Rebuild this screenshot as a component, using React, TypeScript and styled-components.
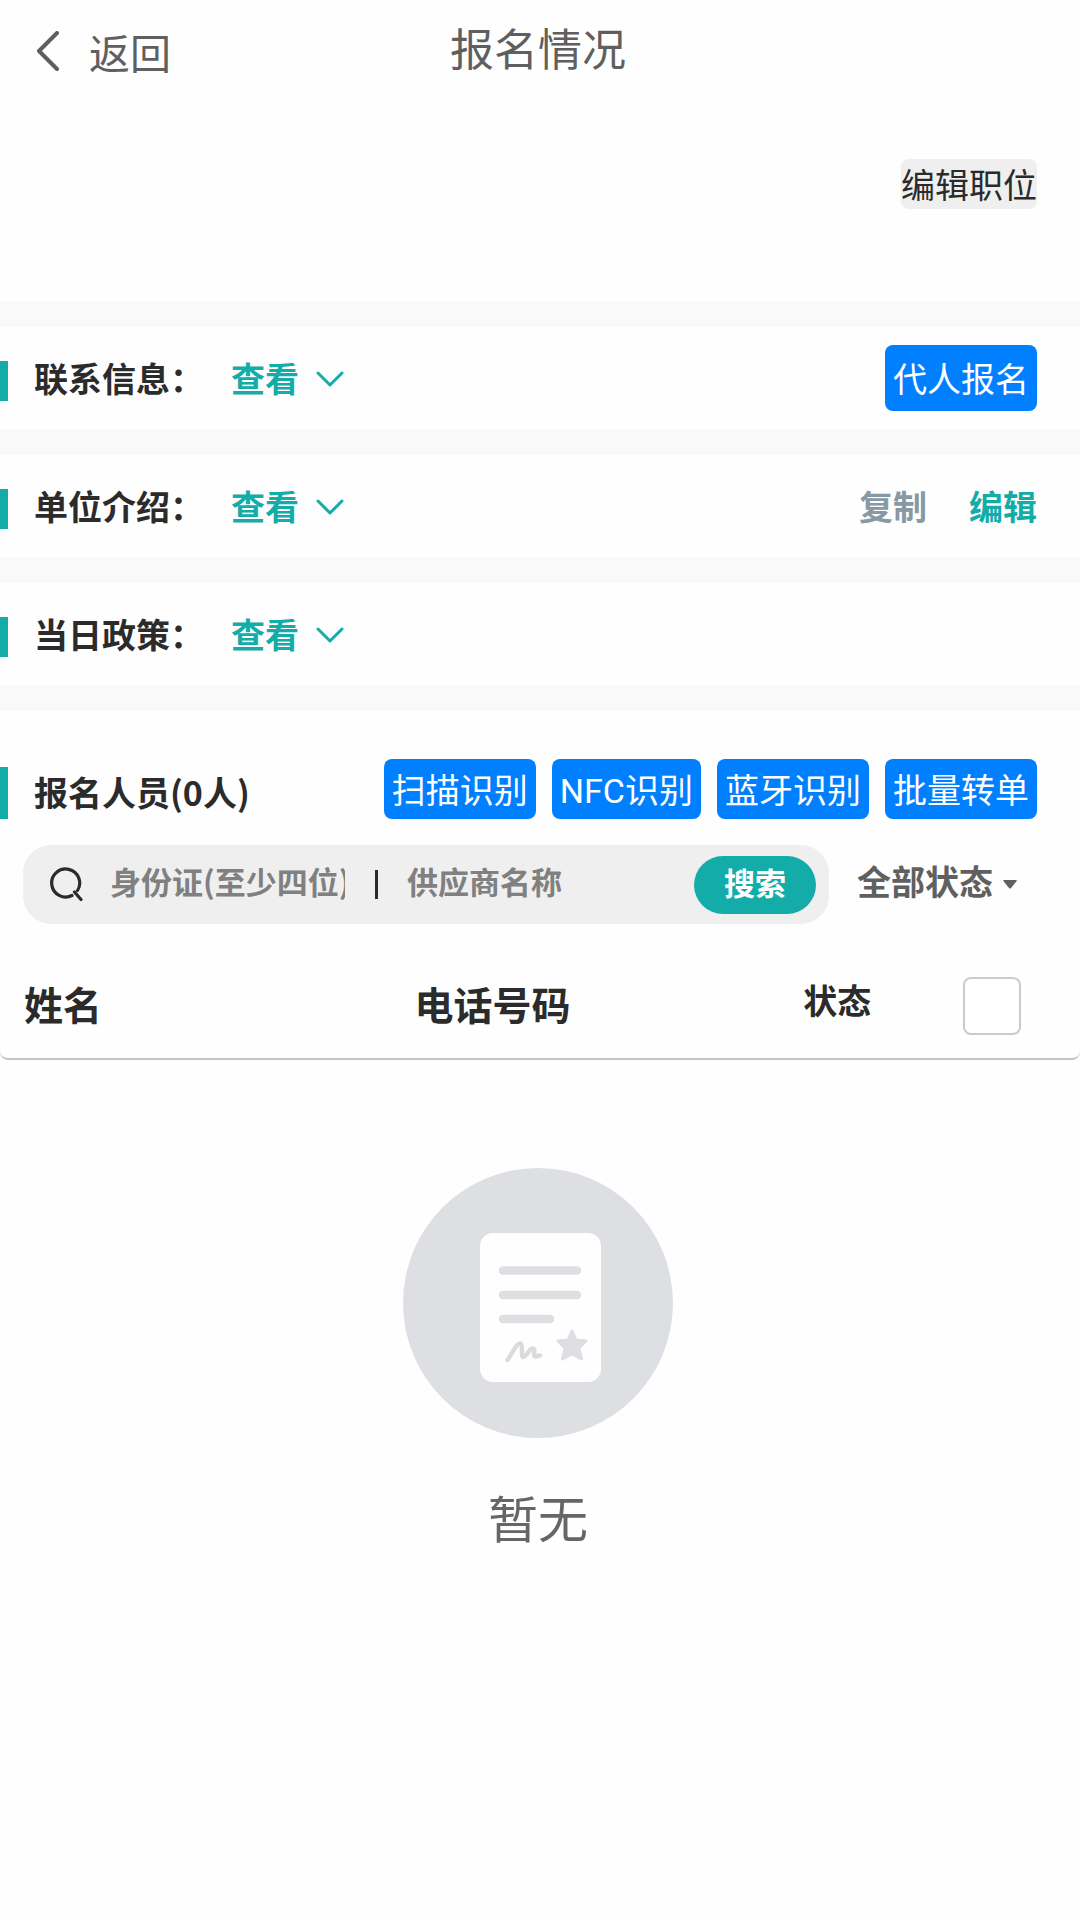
import React from "react";
import styled, { createGlobalStyle } from "styled-components";

const teal = "#13aca9";
const blue = "#0080ff";
const ink = "#2b2b2b";
const mixedFont = `Roboto, "Noto Sans CJK SC", sans-serif`;

const GlobalStyle = createGlobalStyle`
  * { box-sizing: border-box; }
  body {
    margin: 0;
    background: #fefefe;
    color: ${ink};
    font-family: "Noto Sans CJK SC", sans-serif;
  }
  button, input, select { font: inherit; color: inherit; }
  button { cursor: pointer; border: 0; padding: 0; background: none; white-space: nowrap; }
`;

const Page = styled.div`
  min-height: 100vh;
`;

const Header = styled.header`
  display: grid;
  grid-template-columns: 1fr auto 1fr;
  align-items: center;
  height: 102px;
  padding: 0 40px 0 36px;
  color: #5f5f5f;
`;

const BackButton = styled.button`
  display: flex;
  align-items: center;
  gap: 29px;
  justify-self: start;
  font-size: 41px;
  line-height: 60px;
`;

const Title = styled.h1`
  margin: 0;
  font-family: ${mixedFont};
  font-size: 44px;
  font-weight: 400;
  line-height: 64px;
`;

const JobBar = styled.div`
  display: flex;
  justify-content: flex-end;
  align-items: flex-start;
  height: 199px;
  padding: 57px 43px 0 0;
`;

const EditJob = styled.button`
  height: 50px;
  border-radius: 8px;
  background: #efefef;
  font-size: 34px;
  line-height: 50px;
`;

const InfoRow = styled.section`
  display: flex;
  align-items: center;
  height: 128px;
  padding-right: 43px;
  border-top: 26px solid #f9f9f9;
`;

const Marker = styled.span<{ $tall?: boolean }>`
  width: 8px;
  height: ${(p) => (p.$tall ? 52 : 40)}px;
  margin-top: ${(p) => (p.$tall ? 0 : 6)}px;
  margin-right: 26px;
  background: ${teal};
`;

const Label = styled.h2`
  margin: 0;
  font-size: 34px;
  font-weight: 700;
  line-height: 54px;
`;

const ViewButton = styled.button`
  display: flex;
  align-items: center;
  gap: 17px;
  margin-left: 27px;
  color: ${teal};
  font-size: 34px;
  font-weight: 700;
  line-height: 50px;
`;

const Actions = styled.div`
  display: flex;
  align-items: center;
  gap: 16px;
  margin-left: auto;
`;

const TextAction = styled.button<{ $accent?: boolean }>`
  margin-left: 26px;
  color: ${(p) => (p.$accent ? teal : "#8799a3")};
  font-size: 34px;
  font-weight: 700;
  line-height: 50px;
`;

const BlueButton = styled.button<{ $tall?: boolean }>`
  height: ${(p) => (p.$tall ? 66 : 60)}px;
  padding: 4px 8px 0;
  border-radius: 8px;
  background: ${blue};
  color: #fff;
  font-family: ${mixedFont};
  font-size: 34px;
  line-height: 50px;
`;

const PeopleHead = styled.section`
  display: flex;
  align-items: flex-end;
  padding: 48px 43px 26px 0;
  border-top: 26px solid #f9f9f9;
`;

const SearchRow = styled.form`
  display: flex;
  align-items: center;
  padding: 0 63px 0 23px;
`;

const SearchPill = styled.div`
  display: flex;
  flex: 1;
  align-items: center;
  min-width: 0;
  height: 79px;
  padding: 0 13px 0 26px;
  border-radius: 28px;
  background: #efefef;
`;

const SearchIcon = styled.svg`
  flex: none;
  margin-right: 25px;
`;

const SearchInput = styled.input<{ $grow?: boolean }>`
  flex: ${(p) => (p.$grow ? "1" : "0 0 235px")};
  min-width: 0;
  height: 50px;
  padding: 0 0 8px;
  border: 0;
  outline: 0;
  background: none;
  font-size: 31px;
  font-weight: 700;
  &::placeholder { color: #808080; opacity: 1; }
`;

const Divider = styled.span`
  width: 3px;
  height: 29px;
  margin: 0 29px 0 30px;
  background: ${ink};
`;

const SearchButton = styled.button`
  width: 122px;
  height: 58px;
  border-radius: 29px;
  background: ${teal};
  color: #fff;
  font-family: ${mixedFont};
  font-size: 31px;
  font-weight: 700;
  line-height: 50px;
`;

const StatusFilter = styled.label`
  display: flex;
  align-items: center;
  gap: 10px;
  margin-left: 28px;
  color: #606060;
`;

const StatusSelect = styled.select`
  width: 136px;
  padding: 0 0 4px;
  border: 0;
  outline: 0;
  appearance: none;
  background: none;
  font-family: ${mixedFont};
  font-size: 34px;
  font-weight: 700;
  line-height: 50px;
`;

const PeopleTable = styled.table`
  width: 100%;
  table-layout: fixed;
  border-collapse: separate;
  border-spacing: 0;
  margin-top: 20px;
  border-bottom: 2px solid #c4c4c4;
  border-radius: 0 0 8px 8px;
`;

const HeadCell = styled.th<{ $width: string; $small?: boolean; $indent: number }>`
  width: ${(p) => p.$width};
  height: 114px;
  padding: 4px 0 ${(p) => (p.$small ? 6 : 0)}px ${(p) => p.$indent}px;
  font-size: ${(p) => (p.$small ? 34 : 39)}px;
  font-weight: 700;
  line-height: 56px;
  text-align: left;
`;

const CheckCell = styled.th`
  padding: 10px 59px 0 0;
  font-size: 0;
  text-align: right;
`;

const CheckBox = styled.input`
  width: 58px;
  height: 58px;
  margin: 0;
  border: 2px solid #cbcbcb;
  border-radius: 8px;
  appearance: none;
  background: #fff;
  &:checked { background: ${teal}; }
`;

const Empty = styled.section`
  display: flex;
  flex-direction: column;
  align-items: center;
  gap: 42px;
  padding: 108px 4px 0 0;
  color: #666;
`;

const EmptyText = styled.p`
  margin: 0;
  font-size: 50px;
  line-height: 72px;
`;

const ChevronDown = () => (
  <svg width="28" height="18" viewBox="0 0 28 18" fill="none" aria-hidden="true">
    <path d="M2 4 L14 16 L26 4" stroke="currentColor" strokeWidth="3" strokeLinecap="round" strokeLinejoin="round" />
  </svg>
);

const infoRows = ["联系信息：", "单位介绍：", "当日政策："];
const tools = ["扫描识别", "NFC识别", "蓝牙识别", "批量转单"];

export default function App() {
  return (
    <Page>
      <GlobalStyle />
      <Header>
        <BackButton type="button">
          <svg width="24" height="40" viewBox="0 0 24 40" fill="none" aria-hidden="true">
            <path d="M21 2 L3 20 L21 38" stroke="currentColor" strokeWidth="4" strokeLinecap="round" strokeLinejoin="round" />
          </svg>
          返回
        </BackButton>
        <Title>报名情况</Title>
      </Header>

      <JobBar>
        <EditJob type="button">编辑职位</EditJob>
      </JobBar>

      {infoRows.map((label, index) => (
        <InfoRow key={label}>
          <Marker />
          <Label>{label}</Label>
          <ViewButton type="button">
            查看
            <ChevronDown />
          </ViewButton>
          <Actions>
            {index === 0 && <BlueButton type="button" $tall>代人报名</BlueButton>}
            {index === 1 && (
              <>
                <TextAction type="button">复制</TextAction>
                <TextAction type="button" $accent>编辑</TextAction>
              </>
            )}
          </Actions>
        </InfoRow>
      ))}

      <PeopleHead>
        <Marker $tall />
        <Label>报名人员(0人)</Label>
        <Actions>
          {tools.map((tool) => (
            <BlueButton key={tool} type="button">{tool}</BlueButton>
          ))}
        </Actions>
      </PeopleHead>

      <SearchRow onSubmit={(event) => event.preventDefault()}>
        <SearchPill>
          <SearchIcon width="36" height="36" viewBox="0 0 36 36" fill="none" aria-hidden="true">
            <path d="M23 28.500 A14 14 0 1 1 28.500 23.500 M25.500 25 L32 32.500" stroke={ink} strokeWidth="3.200" strokeLinecap="round" />
          </SearchIcon>
          <SearchInput aria-label="身份证" placeholder="身份证(至少四位)" />
          <Divider />
          <SearchInput $grow aria-label="供应商名称" placeholder="供应商名称" />
          <SearchButton type="submit">搜索</SearchButton>
        </SearchPill>
        <StatusFilter>
          <StatusSelect aria-label="状态">
            <option>全部状态</option>
          </StatusSelect>
          <svg width="14" height="9" viewBox="0 0 14 9" aria-hidden="true">
            <path d="M1 0 H13 Q14.500 0 13.500 1.200 L8 8 Q7 9 6 8 L0.500 1.200 Q-0.500 0 1 0 Z" fill="currentColor" />
          </svg>
        </StatusFilter>
      </SearchRow>

      <PeopleTable>
        <thead>
          <tr>
            <HeadCell scope="col" $width="38%" $indent={24}>姓名</HeadCell>
            <HeadCell scope="col" $width="36%" $indent={4}>电话号码</HeadCell>
            <HeadCell scope="col" $width="14%" $indent={4} $small>状态</HeadCell>
            <CheckCell scope="col">
              <CheckBox type="checkbox" aria-label="全选" />
            </CheckCell>
          </tr>
        </thead>
      </PeopleTable>

      <Empty>
        <svg width="270" height="270" viewBox="0 0 270 270" fill="none" aria-hidden="true">
          <circle cx="135" cy="135" r="135" fill="#dedfe3" />
          <rect x="77" y="65" width="121" height="149" rx="13" fill="#fefefe" />
          <path d="M100 102.500 H174 M100 127 H174 M100 151 H147" stroke="#dedfe3" strokeWidth="8.500" strokeLinecap="round" />
          <path d="M104.500 192 C109 186 113 175.500 117.500 175.500 C121 177 117 188 120 189 C124 189 126 180 130 180.500 C133.500 181 129 187 132 188.500 C134 189 135 187 137 187.500" stroke="#dadbdb" strokeWidth="4.500" strokeLinecap="round" strokeLinejoin="round" />
          <path d="M169 163 L173 172 L183 173 L176 180 L178.500 191 L169 186 L159.500 191 L162 180 L155 173 L165 172 Z" fill="#dedfe3" stroke="#dedfe3" strokeWidth="3" strokeLinejoin="round" />
        </svg>
        <EmptyText>暂无</EmptyText>
      </Empty>
    </Page>
  );
}
